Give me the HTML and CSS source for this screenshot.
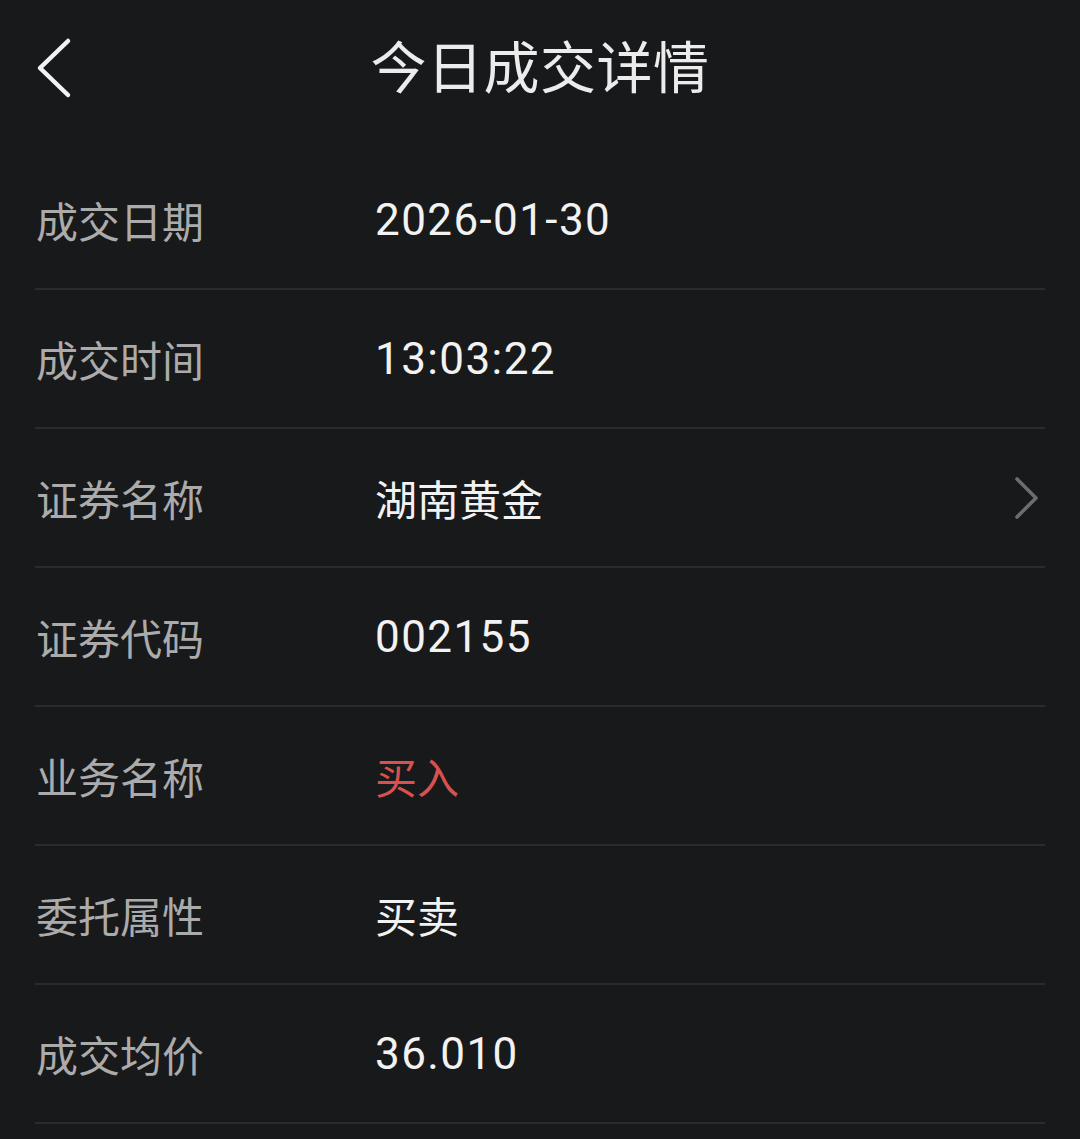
FILE: index.html
```html
<!DOCTYPE html>
<html lang="zh-CN">
<head>
    <meta charset="UTF-8">
    <meta name="viewport" content="width=device-width, initial-scale=1.0">
    <title>今日成交详情</title>
    <link rel="stylesheet" href="styles.css">
</head>
<body>
    <header class="top-bar">
        <span class="back">
            <svg width="50" height="72" viewBox="0 0 50 72">
                <path d="M38 7 L10 34 L38 61" fill="none" stroke="#f2f2f2" stroke-width="4.5" stroke-linecap="round" stroke-linejoin="round"/>
            </svg>
        </span>
        <h1>今日成交详情</h1>
    </header>

    <div class="detail-list">
        <div class="row">
            <span class="label">成交日期</span>
            <span class="value num">2026-01-30</span>
        </div>
        <div class="row">
            <span class="label">成交时间</span>
            <span class="value num">13:03:22</span>
        </div>
        <div class="row">
            <span class="label">证券名称</span>
            <span class="value">湖南黄金</span>
            <svg class="arrow" width="30" height="48" viewBox="0 0 30 48">
                <path d="M4 5 L23 24 L4 43" fill="none" stroke="#6c6d72" stroke-width="3.6" stroke-linecap="round" stroke-linejoin="round"/>
            </svg>
        </div>
        <div class="row">
            <span class="label">证券代码</span>
            <span class="value num">002155</span>
        </div>
        <div class="row">
            <span class="label">业务名称</span>
            <span class="value buy">买入</span>
        </div>
        <div class="row">
            <span class="label">委托属性</span>
            <span class="value">买卖</span>
        </div>
        <div class="row">
            <span class="label">成交均价</span>
            <span class="value num">36.010</span>
        </div>
    </div>
</body>
</html>
```

FILE: styles.css
```css
body {
    margin: 0;
    padding: 0;
    background-color: #18191b;
    color: #f2f2f2;
    font-family: Roboto, "Noto Sans CJK SC", sans-serif;
}

.top-bar {
    position: relative;
    height: 151px;
    display: flex;
    align-items: flex-start;
    justify-content: center;
}

.top-bar h1 {
    margin: 30px 0 0;
    font-size: 56px;
    font-weight: 400;
    line-height: 68px;
    color: #ececec;
    letter-spacing: 0.5px;
    font-family: "Noto Sans CJK SC", sans-serif;
}

.back {
    position: absolute;
    left: 30px;
    top: 34px;
    display: flex;
}

.detail-list {
    padding: 0 35px;
}

.row {
    display: flex;
    align-items: center;
    height: 137px;
    border-bottom: 2px solid #2a2b2e;
}

.label {
    width: 339px;
    padding-left: 1px;
    font-size: 42px;
    color: #ababab;
    font-family: "Noto Sans CJK SC", sans-serif;
}

.value {
    flex: 1;
    font-size: 42px;
    color: #f2f2f2;
    font-family: "Noto Sans CJK SC", sans-serif;
}

.value.num {
    font-size: 44px;
    letter-spacing: 1.4px;
    font-family: Roboto, sans-serif;
}

.value.buy {
    color: #d9514f;
}

.arrow {
    margin-right: 2px;
}
```
